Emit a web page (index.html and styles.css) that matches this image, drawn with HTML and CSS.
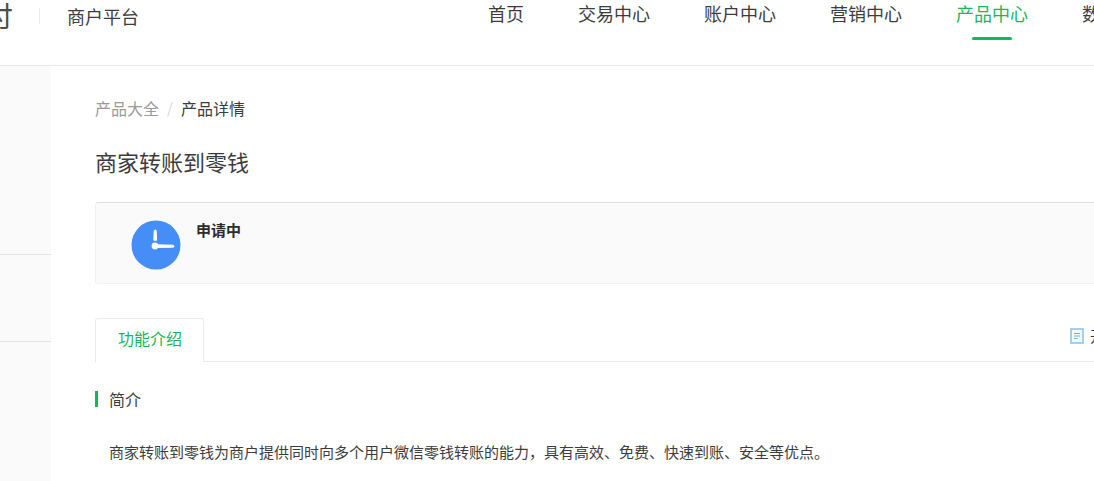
FILE: index.html
```html
<!DOCTYPE html>
<html lang="zh-CN">
<head>
<meta charset="utf-8">
<title>商户平台</title>
<link rel="stylesheet" href="styles.css">
</head>
<body>
<header class="header">
  <div class="logo"><span>付</span></div>
  <div class="platform">商户平台</div>
  <nav class="nav">
    <a href="#">首页</a>
    <a href="#">交易中心</a>
    <a href="#">账户中心</a>
    <a href="#">营销中心</a>
    <a href="#" class="active">产品中心</a>
    <a href="#" class="last">数据中心</a>
  </nav>
</header>
<div class="body">
  <aside class="sidebar">
    <div class="group group-first"></div>
    <div class="group"></div>
  </aside>
  <main class="main">
    <div class="crumbs"><a href="#">产品大全</a><i>/</i><span>产品详情</span></div>
    <h1 class="title">商家转账到零钱</h1>
    <section class="status">
      <svg class="clock" viewBox="0 0 50 50" aria-hidden="true">
        <circle cx="25" cy="25" r="24.5" fill="#458df7"/>
        <path d="M23.2 10.6q1-1.4 2 0l.4 9.6h-2.8z" fill="#fff" stroke="#fff" stroke-linejoin="round"/>
        <circle cx="24" cy="26" r="3.4" fill="#fff"/>
        <path d="M26 24.8l16.4.4q1.4 1 0 2l-16.4.2z" fill="#fff" stroke="#fff" stroke-linejoin="round"/>
      </svg>
      <strong>申请中</strong>
    </section>
    <div class="tabs">
      <button type="button" class="tab">功能介绍</button>
      <span class="rule"></span>
      <a href="#" class="doc">
        <svg viewBox="0 0 14 16" aria-hidden="true">
          <rect x="1" y="1" width="12" height="14" fill="#f2faff" stroke="#8cc5ea" stroke-width="1.6"/>
          <path d="M4 5.5h6M4 8h6M4 10.5h3.5" stroke="#74b2df" stroke-width="1.1"/>
        </svg>
        <span>开发文档</span>
      </a>
    </div>
    <h2 class="heading">简介</h2>
    <p class="text">商家转账到零钱为商户提供同时向多个用户微信零钱转账的能力，具有高效、免费、快速到账、安全等优点。</p>
  </main>
</div>
</body>
</html>
```
FILE: styles.css
```css
* { box-sizing: border-box; }
body {
  margin: 0;
  min-height: 100vh;
  display: flex;
  flex-direction: column;
  background: #fff;
  color: #3c3c3c;
  font-family: "Noto Sans CJK SC", sans-serif;
  font-size: 15px;
  line-height: 24px;
  overflow: hidden;
}
a { color: inherit; text-decoration: none; }
.header {
  display: flex;
  align-items: flex-start;
  border-bottom: 1px solid #e7e7e7;
  padding-bottom: 25px;
  white-space: nowrap;
}
.logo {
  display: flex;
  justify-content: flex-end;
  width: 13px;
  overflow: hidden;
  font-size: 28px;
  line-height: 30px;
  color: #4c4c4c;
}
.platform {
  margin: 8px 0 0 26px;
  padding-left: 27px;
  border-left: 1px solid #ebebeb;
  font-size: 18px;
  line-height: 16px;
}
.nav {
  display: flex;
  gap: 54px;
  margin-left: auto;
  padding-top: 1px;
  font-size: 18px;
}
.nav a {
  display: flex;
  flex-direction: column;
  align-items: center;
  gap: 12px;
}
.nav a::after {
  content: "";
  width: 40px;
  height: 3px;
  border-radius: 2px;
}
.nav a:first-child::after { width: 36px; }
.nav .active { color: #1ab55c; }
.nav .active::after { background: #10b958; }
.nav .last { width: 12px; align-items: flex-start; }
.nav .last::after { width: 0; }
.body { display: flex; flex: 1; }
.sidebar {
  flex: none;
  width: 51px;
  background: #fafafa;
}
.group { height: 87px; border-bottom: 1px solid #e3e3e3; }
.group-first { height: 189px; }
.main { flex: 1; min-width: 0; padding: 30px 0 0 44px; }
.crumbs { display: flex; font-size: 16px; }
.crumbs a { color: #9a9a9a; }
.crumbs i { width: 22px; text-align: center; font-style: normal; font-size: 15px; color: #d8d8d8; }
.title { margin: 25px 0 0; font-size: 22px; font-weight: 400; line-height: 32px; }
.status {
  display: flex;
  gap: 15px;
  margin-top: 25px;
  padding: 15px 0 13px 35px;
  border: 1px solid #f1f1f1;
  border-top-color: #dedede;
  border-right: 0;
  border-radius: 3px 0 0 3px;
  background: #fafafa;
}
.status strong { color: #2c2c2c; }
.clock { width: 50px; height: 50px; margin-top: 2px; }
.tabs { display: flex; align-items: stretch; margin-top: 34px; height: 44px; }
.tab {
  padding: 0 21px 6px 22px;
  border: 1px solid #ebebeb;
  border-bottom: 0;
  border-radius: 3px 3px 0 0;
  background: #fff;
  color: #1ab55c;
  font: inherit;
  font-size: 16px;
}
.rule { flex: 1; border-bottom: 1px solid #ebebeb; }
.doc {
  display: flex;
  gap: 6px;
  width: 24px;
  padding-top: 6px;
  border-bottom: 1px solid #ebebeb;
  white-space: nowrap;
}
.doc svg { flex: none; width: 14px; height: 16px; margin-top: 4px; }
.heading {
  margin: 29px 0 0;
  padding-left: 11px;
  border-left: 3px solid #10b958;
  font-size: 16px;
  font-weight: 400;
  line-height: 16px;
}
.text { margin: 33px 0 0 14px; }
```
